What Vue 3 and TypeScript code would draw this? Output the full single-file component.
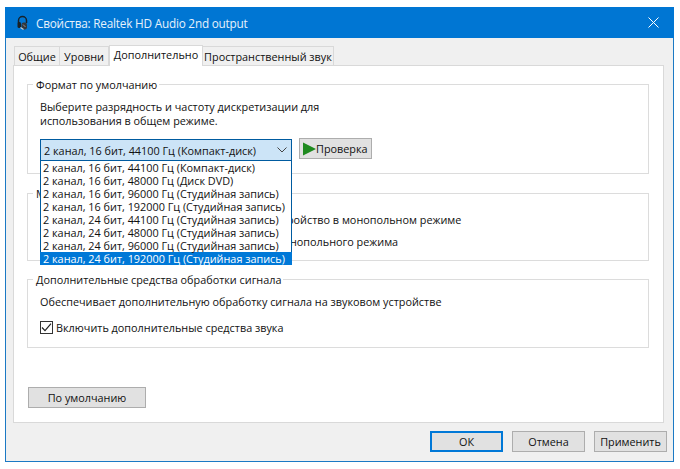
<script setup lang="ts">
const formats: string[] = [
  '2 канал, 16 бит, 44100 Гц (Компакт-диск)',
  '2 канал, 16 бит, 48000 Гц (Диск DVD)',
  '2 канал, 16 бит, 96000 Гц (Студийная запись)',
  '2 канал, 16 бит, 192000 Гц (Студийная запись)',
  '2 канал, 24 бит, 44100 Гц (Студийная запись)',
  '2 канал, 24 бит, 48000 Гц (Студийная запись)',
  '2 канал, 24 бит, 96000 Гц (Студийная запись)',
  '2 канал, 24 бит, 192000 Гц (Студийная запись)',
]
const tabs: string[] = ['Общие', 'Уровни', 'Дополнительно', 'Пространственный звук']
</script>

<template>
  <div class="page">
    <div class="window">
      <header class="titlebar">
        <svg class="app-icon" width="14" height="16" viewBox="0 0 14 16">
          <path d="M2.5 8V5.5a4 4 0 0 1 8 0V8" fill="none" stroke="#16222b" stroke-width="1.5" />
          <rect x="1.5" y="7" width="3.5" height="6" rx="1.5" fill="#1a2025" />
          <rect x="5.5" y="7.5" width="5.5" height="7" rx="2.2" fill="#33383d" />
          <path d="M4.5 12.5l3 2" stroke="#c9d3da" stroke-width="1.2" />
          <path d="M7 9.5l2.5 2.5" stroke="#8a9198" stroke-width="1" />
        </svg>
        <span class="title">Свойства: Realtek HD Audio 2nd output</span>
        <svg class="close" width="11" height="11" viewBox="0 0 11 11">
          <path d="M.5.5l10 10M10.5.5l-10 10" stroke="#fff" stroke-width="1" fill="none" />
        </svg>
      </header>

      <div class="body">
        <nav class="tabs">
          <span
            v-for="(t, i) in tabs"
            :key="t"
            class="tab"
            :class="[`tab-${i}`, { active: i === 2 }]"
          >{{ t }}</span>
        </nav>

        <section class="panel">
          <fieldset class="group group-format">
            <legend>Формат по умолчанию</legend>
            <p class="desc">Выберите разрядность и частоту дискретизации для<br />использования в общем режиме.</p>
            <div class="format-row">
              <div class="combo-wrap">
                <div class="combo">
                  <span>{{ formats[0] }}</span>
                  <svg width="10" height="6" viewBox="0 0 10 6">
                    <path d="M.5.5L5 5 9.5.5" fill="none" stroke="#444" stroke-width="1" />
                  </svg>
                </div>
                <ul class="list">
                  <li v-for="(f, i) in formats" :key="f" :class="{ selected: i === 7 }">{{ f }}</li>
                </ul>
              </div>
              <button class="btn test" type="button">
                <svg width="14" height="14" viewBox="0 0 14 14">
                  <path d="M1 0.5L14 7 1 13.5z" fill="#1f8a1f" />
                </svg>
                <span>Проверка</span>
              </button>
            </div>
          </fieldset>

          <fieldset class="group group-mono">
            <legend>Монопольный режим</legend>
            <label class="check first"><span class="box"></span>Разрешить приложениям использовать устройство в монопольном режиме</label>
            <label class="check second"><span class="box"></span>Предоставлять приоритет приложениям монопольного режима</label>
          </fieldset>

          <fieldset class="group group-fx">
            <legend>Дополнительные средства обработки сигнала</legend>
            <p class="fx-desc">Обеспечивает дополнительную обработку сигнала на звуковом устройстве</p>
            <label class="check fx-check">
              <span class="box">
                <svg width="13" height="13" viewBox="0 0 13 13">
                  <path d="M2 6.5l3 3.2L11 2.6" fill="none" stroke="#222" stroke-width="1.2" />
                </svg>
              </span>Включить дополнительные средства звука
            </label>
          </fieldset>

          <button class="btn default" type="button">По умолчанию</button>
        </section>

        <footer class="footer">
          <button class="btn action ok" type="button">ОК</button>
          <button class="btn action" type="button">Отмена</button>
          <button class="btn action" type="button">Применить</button>
        </footer>
      </div>
    </div>
  </div>
</template>

<style>
html, body { margin: 0; background: #fff; }
</style>

<style scoped>
.page {
  width: 680px;
  height: 469px;
  padding: 7px 0 0 5px;
  box-sizing: border-box;
  overflow: hidden;
  font-family: "Open Sans", "Noto Sans", sans-serif;
  font-size: 10.85px;
  color: #111;
}
.window {
  width: 669px;
  height: 455px;
  box-sizing: border-box;
  border: 1px solid #1b79c4;
  border-top: 0;
  background: #f0f0f0;
  display: flex;
  flex-direction: column;
}
.titlebar {
  height: 31px;
  margin: 0 -1px;
  background: #0076d3;
  display: flex;
  align-items: center;
  padding: 0 15px 0 11px;
  flex: none;
  color: #e6f1fb;
}
.app-icon { flex: none; margin-right: 6px; }
.title { font-size: 11.75px; letter-spacing: -0.2px; flex: 1; white-space: nowrap; }
.close { flex: none; }

.body {
  flex: 1;
  display: flex;
  flex-direction: column;
  padding: 7px 8px 0 7px;
}
.tabs {
  display: flex;
  height: 20px;
  align-items: flex-end;
  padding-left: 1px;
}
.tab {
  box-sizing: border-box;
  height: 19px;
  line-height: 20px;
  text-align: center;
  border: 1px solid #d9d9d9;
  border-bottom: 0;
  border-left-width: 0;
  white-space: nowrap;
}
.tab-0 { width: 46px; border-left-width: 1px; }
.tab-1 { width: 49px; }
.tab-2 { width: 94px; }
.tab-3 { width: 131px; }
.tab.active {
  height: 21px;
  line-height: 18px;
  background: #fff;
  border-left-width: 1px;
  position: relative;
  z-index: 1;
  margin-bottom: -1px;
}
.panel {
  box-sizing: border-box;
  width: 651px;
  height: 358px;
  flex: none;
  background: #fff;
  border: 1px solid #d9d9d9;
  padding: 11px 14px 0 13px;
  display: flex;
  flex-direction: column;
}
.group {
  margin: 0;
  padding: 0 12px;
  border: 1px solid #dcdcdc;
  min-width: 0;
  box-sizing: border-box;
  flex: none;
}
.group legend {
  padding: 0 2px 0 3px;
  margin-left: -7px;
  line-height: 15px;
}
.group-format { height: 97px; }
.group-mono { height: 75px; margin-top: 12px; }
.group-fx { height: 76px; margin-top: 11px; }
.desc { margin: 8px 0 0; line-height: 14px; }
.format-row {
  display: flex;
  align-items: flex-start;
  margin-top: 11px;
  gap: 7px;
}
.combo-wrap { position: relative; width: 252px; flex: none; }
.combo {
  box-sizing: border-box;
  height: 22px;
  background: #cce4f7;
  border: 1px solid #005ba0;
  display: flex;
  align-items: center;
  justify-content: space-between;
  padding: 0 4px 0 3px;
  white-space: nowrap;
}
.list {
  position: absolute;
  left: 0;
  top: 22px;
  width: 252px;
  box-sizing: border-box;
  margin: 0;
  padding: 0;
  list-style: none;
  background: #fff;
  border: 1px solid #005ba0;
  border-top: 0;
  border-bottom: 0;
  z-index: 5;
}
.list li {
  height: 13px;
  line-height: 13px;
  white-space: nowrap;
  padding-left: 2px;
}
.list li.selected {
  background: #0078d7;
  color: #fff;
  margin: 0 -1px;
  padding-left: 3px;
}
.btn {
  font: inherit;
  color: inherit;
  background: #e1e1e1;
  border: 1px solid #adadad;
  box-sizing: border-box;
  padding: 0;
  height: 21px;
}
.test {
  width: 73px;
  margin-top: -1px;
  display: flex;
  align-items: center;
  padding-left: 2px;
  gap: 0;
}
.check { display: flex; align-items: center; white-space: nowrap; line-height: 15px; }
.box {
  width: 13px;
  height: 13px;
  box-sizing: border-box;
  border: 1px solid #333;
  background: #fff;
  margin-right: 3px;
  flex: none;
  display: inline-flex;
  align-items: center;
  justify-content: center;
}
.box svg { flex: none; margin: -1px; }
.first { margin-top: 11px; }
.second { margin-top: 7px; }
.fx-desc { margin: 7px 0 0; line-height: 15px; }
.fx-check { margin-top: 11px; }
.default {
  width: 118px;
  height: 21px;
  margin: 39px 0 0 1px;
  flex: none;
}
.footer {
  display: flex;
  justify-content: flex-end;
  gap: 9px;
  margin-top: 8px;
  margin-right: -2px;
}
.action { width: 73px; height: 21px; }
.ok { border: 2px solid #0078d7; }
</style>
